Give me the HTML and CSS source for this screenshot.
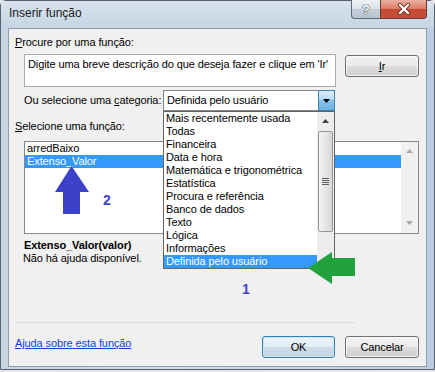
FILE: index.html
```html
<!DOCTYPE html>
<html lang="pt">
<head>
  <meta charset="UTF-8">
  <title>Inserir função</title>
  <link rel="stylesheet" href="styles.css">
</head>
<body>
  <div class="window">
    <div class="titlebar">
      <span class="title">Inserir função</span>
      <div class="caption-btns">
        <div class="cap-btn help">?</div>
        <div class="cap-btn close">
          <svg width="14" height="12" viewBox="0 0 14 12">
            <path d="M3 2 L11 10 M11 2 L3 10" stroke="#6a3a33" stroke-width="4" stroke-linecap="round"/>
            <path d="M3 2 L11 10 M11 2 L3 10" stroke="#fff" stroke-width="2.2" stroke-linecap="round"/>
          </svg>
        </div>
      </div>
    </div>

    <div class="client">
      <div class="label"><u>P</u>rocure por uma função:</div>

      <div class="search-row">
        <div class="textbox">Digite uma breve descrição do que deseja fazer e clique em 'Ir'</div>
        <div class="btn go"><u>I</u>r</div>
      </div>

      <div class="cat-row">
        <span class="cat-label">Ou selecione uma <u>c</u>ategoria:</span>
        <div class="combo">
          <span class="combo-text">Definida pelo usuário</span>
          <div class="combo-btn">
            <svg width="7" height="4" viewBox="0 0 7 4"><path d="M0 0 H7 L3.5 4 Z" fill="#000"/></svg>
          </div>
          <!-- open dropdown -->
          <div class="droplist">
            <div class="items">
              <div class="ditem">Mais recentemente usada</div>
              <div class="ditem">Todas</div>
              <div class="ditem">Financeira</div>
              <div class="ditem">Data e hora</div>
              <div class="ditem">Matemática e trigonométrica</div>
              <div class="ditem">Estatística</div>
              <div class="ditem">Procura e referência</div>
              <div class="ditem">Banco de dados</div>
              <div class="ditem">Texto</div>
              <div class="ditem">Lógica</div>
              <div class="ditem">Informações</div>
              <div class="ditem sel">Definida pelo usuário</div>
            </div>
            <div class="dscroll">
              <svg class="arrow-up" width="7" height="4" viewBox="0 0 7 4"><path d="M0 4 H7 L3.5 0 Z" fill="#404040"/></svg>
              <div class="thumb">
                <span class="grip"></span>
                <span class="grip"></span>
                <span class="grip"></span>
                <span class="grip"></span>
              </div>
            </div>
          </div>
        </div>
      </div>

      <div class="label sel-label"><u>S</u>elecione uma função:</div>

      <div class="listbox">
        <div class="items">
          <div class="litem">arredBaixo</div>
          <div class="litem sel">Extenso_Valor</div>
        </div>
        <div class="lscroll">
          <svg width="7" height="4" viewBox="0 0 7 4"><path d="M0 4 H7 L3.5 0 Z" fill="#a8a8a8"/></svg>
          <svg width="7" height="4" viewBox="0 0 7 4"><path d="M0 0 H7 L3.5 4 Z" fill="#a8a8a8"/></svg>
        </div>
      </div>

      <div class="fn-sig">Extenso_Valor(valor)</div>
      <div class="fn-help">Não há ajuda disponível.</div>

      <div class="spacer"></div>
      <div class="separator"></div>

      <div class="footer">
        <a class="help-link" href="#">Ajuda sobre esta função</a>
        <div class="buttons">
          <div class="btn ok">OK</div>
          <div class="btn cancel">Cancelar</div>
        </div>
      </div>
    </div>
  </div>

  <!-- hand-drawn annotations on top of the screenshot -->
  <svg class="annotations" width="435" height="372" viewBox="0 0 435 372">
    <polygon points="71.5,166 55,192 63,192 63,214 80,214 80,192 89,192" fill="#3d40c8"/>
    <polygon points="308,268 332,252 332,258 355,258 355,276 332,276 332,284" fill="#22a23c"/>
    <text x="103" y="205" class="num">2</text>
    <text x="242" y="294" class="num">1</text>
  </svg>
</body>
</html>
```

FILE: styles.css
```css
body {
  margin: 0;
  width: 435px;
  height: 372px;
  position: relative;
  overflow: hidden;
  background: #e9e5e7;
  font-family: "Liberation Sans", Arial, sans-serif;
  font-size: 11px;
  letter-spacing: -0.1px;
  color: #000;
}
.window {
  width: 435px;
  height: 370px;
  box-sizing: border-box;
  border: 1px solid #55626f;
  border-radius: 6px 6px 0 0;
  background: linear-gradient(90deg, #c8d5e2, #d4dee8 40%, #c4d3e2 80%, #bacde1);
  display: flex;
  flex-direction: column;
}
/* Title bar */
.titlebar {
  height: 27px;
  display: flex;
  justify-content: space-between;
  align-items: flex-start;
  background: linear-gradient(#d9e3ed, #c6d4e3);
}
.title {
  font-size: 12px;
  line-height: 14px;
  letter-spacing: 0;
  margin: 5px 0 0 8px;
  color: #1b1b1b;
}
.caption-btns {
  display: flex;
  margin: -1px 7px 0 0;
}
.cap-btn {
  height: 19px;
  box-sizing: border-box;
  display: flex;
  align-items: center;
  justify-content: center;
  border: 1px solid #5f6c79;
  border-top: none;
}
.help {
  width: 29px;
  border-radius: 0 0 0 4px;
  border-right: none;
  background: linear-gradient(#eef2f6, #dbe2ea 50%, #c6cfd9 50%, #b9c4d0);
  color: #fff;
  font-weight: bold;
  font-size: 13px;
  text-shadow: 0 0 1px #3b4652, 0 0 1px #3b4652, 0 0 1px #3b4652;
}
.close {
  width: 47px;
  border-radius: 0 0 4px 0;
  border-color: #6a3a33;
  background: linear-gradient(#eab0a1, #dc7a63 50%, #c9472f 50%, #c2523b);
}
/* Client area */
.client {
  margin: 0 7px;
  height: 339px;
  box-sizing: border-box;
  border: 1px solid #8f9dac;
  background: #f1f0f0;
  padding: 7px 7px 8px 6px;
  display: flex;
  flex-direction: column;
}
.label {
  line-height: 13px;
}
.search-row {
  display: flex;
  align-items: flex-start;
  gap: 9px;
  margin-top: 5px;
  padding-left: 9px;
}
.textbox {
  width: 312px;
  height: 33px;
  box-sizing: border-box;
  border: 1px solid #abadb3;
  background: #fff;
  padding: 3px;
  line-height: 13px;
  white-space: nowrap;
  overflow: hidden;
}
.btn {
  box-sizing: border-box;
  width: 74px;
  height: 22px;
  border: 1px solid #707070;
  border-radius: 3px;
  background: linear-gradient(#f2f2f2, #ebebeb 50%, #dddddd 50%, #cfcfcf);
  box-shadow: inset 0 0 0 1px rgba(255, 255, 255, 0.7);
  display: flex;
  align-items: center;
  justify-content: center;
}
.go {
  margin-top: 1px;
}
.cat-row {
  display: flex;
  align-items: center;
  height: 21px;
  margin-top: 3px;
  padding-left: 9px;
}
.cat-label {
  width: 139px;
  flex-shrink: 0;
  white-space: nowrap;
  line-height: 13px;
}
.combo {
  position: relative;
  width: 172px;
  height: 21px;
  box-sizing: border-box;
  border: 1px solid #7e8791;
  background: #fff;
  padding-left: 3px;
  line-height: 19px;
}
.combo-btn {
  position: absolute;
  right: -1px;
  top: -1px;
  width: 17px;
  height: 21px;
  box-sizing: border-box;
  border: 1px solid #3c7fb1;
  background: linear-gradient(#d8effc, #b1dbf6 50%, #86c3ec 50%, #6db2e2);
  display: flex;
  align-items: center;
  justify-content: center;
}
.droplist {
  position: absolute;
  left: -1px;
  top: 20px;
  width: 172px;
  height: 158px;
  box-sizing: border-box;
  border: 1px solid #646464;
  background: #fff;
  display: flex;
  z-index: 2;
}
.droplist .items {
  flex: 1;
}
.ditem {
  line-height: 13px;
  padding-left: 2px;
  white-space: nowrap;
}
.ditem.sel, .litem.sel {
  background: #3399ff;
  color: #fff;
}
.dscroll {
  width: 17px;
  background: #ededed;
  display: flex;
  flex-direction: column;
  align-items: center;
}
.arrow-up {
  margin-top: 7px;
}
.thumb {
  width: 15px;
  height: 101px;
  box-sizing: border-box;
  margin-top: 8px;
  border: 1px solid #979797;
  border-radius: 2px;
  background: linear-gradient(90deg, #f3f3f3, #e6e6e6 50%, #d6d6d6);
  display: flex;
  flex-direction: column;
  align-items: center;
  justify-content: center;
  gap: 1px;
}
.grip {
  width: 7px;
  height: 1px;
  background: #606060;
}
.sel-label {
  margin-top: 9px;
}
.listbox {
  margin: 8px 0 0 9px;
  height: 93px;
  box-sizing: border-box;
  border: 1px solid #828790;
  background: #fff;
  display: flex;
}
.listbox .items {
  flex: 1;
}
.litem {
  line-height: 13px;
  padding-left: 2px;
}
.lscroll {
  width: 17px;
  background: #f0f0f0;
  display: flex;
  flex-direction: column;
  justify-content: space-between;
  align-items: center;
  padding: 7px 0 8px;
  box-sizing: border-box;
}
.fn-sig {
  font-weight: bold;
  line-height: 13px;
  margin-top: 5px;
  padding-left: 9px;
}
.fn-help {
  line-height: 13px;
  padding-left: 8px;
}
.spacer {
  flex: 1;
}
.separator {
  width: 340px;
  height: 1px;
  background: #d4e0e8;
  margin-bottom: 13px;
}
.footer {
  display: flex;
  justify-content: space-between;
  align-items: flex-start;
}
.help-link {
  margin-top: 1px;
  line-height: 13px;
  color: #1240e0;
}
.buttons {
  display: flex;
  gap: 10px;
}
.ok {
  width: 73px;
  border-color: #3c7fb1;
  background: linear-gradient(#eef5fa, #e2ecf3 50%, #cfdde8 50%, #c3d4e0);
  box-shadow: inset 0 0 0 1px #c6e6f8;
}
/* Annotations drawn over the dialog */
.annotations {
  position: absolute;
  left: 0;
  top: 0;
  z-index: 5;
}
.num {
  font-family: "Liberation Sans", Arial, sans-serif;
  font-size: 14px;
  font-weight: bold;
  fill: #4343cf;
}
```
